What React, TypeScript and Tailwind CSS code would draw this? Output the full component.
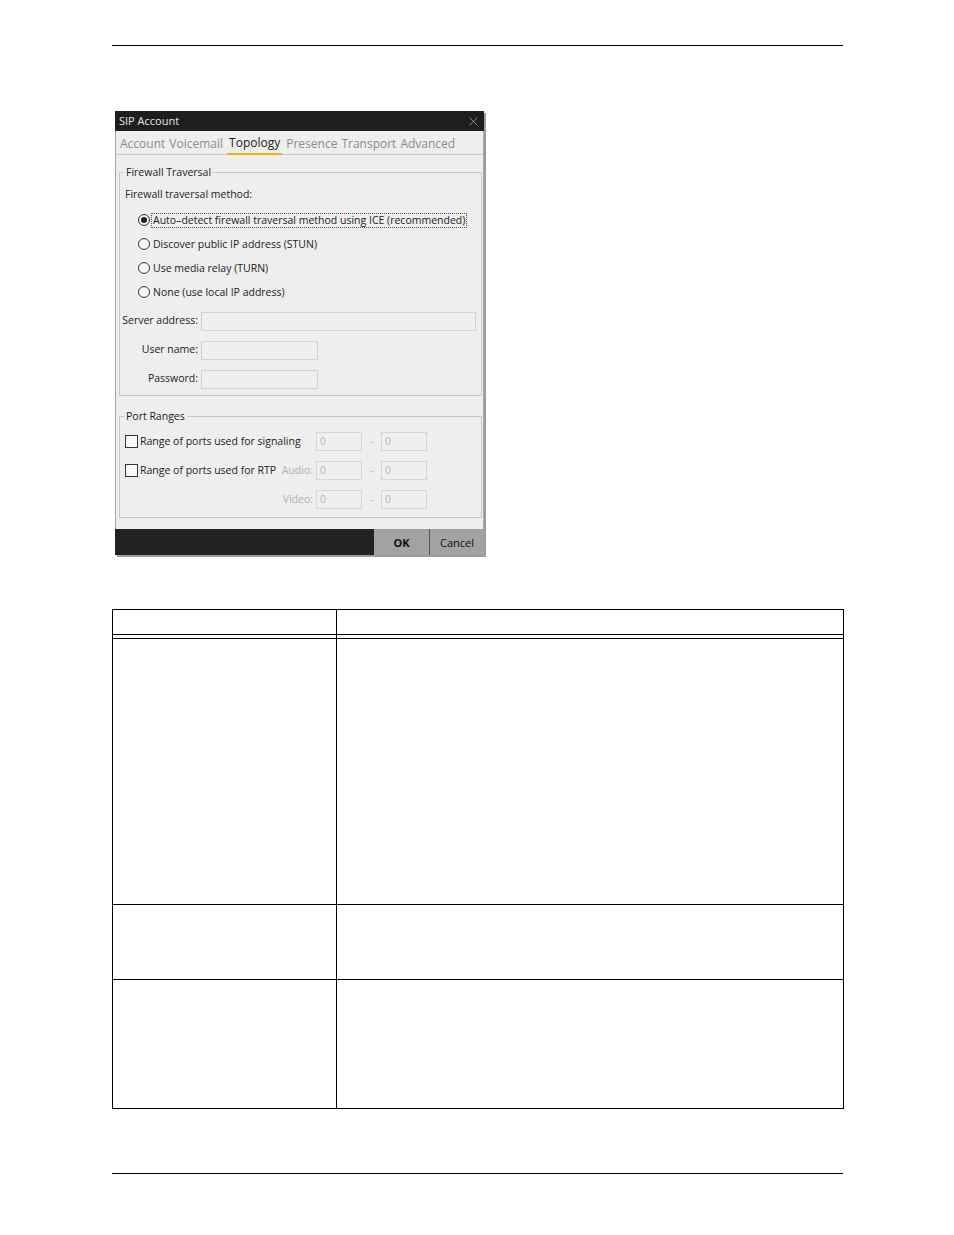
import React from 'react';
import { X } from 'lucide-react';

const uiFont = { fontFamily: '"Open Sans", "Noto Sans", "Liberation Sans", sans-serif' };

const Radio: React.FC<{ checked?: boolean; label: string; focused?: boolean }> = ({ checked, label, focused }) => (
  <div className="flex h-[24px] items-center pl-[13px]">
    <span className="flex size-[12px] items-center justify-center rounded-full border border-[#333] bg-[#f7f7f7]">
      {checked && <span className="size-[6px] rounded-full bg-[#222]" />}
    </span>
    <span
      className={
        'ml-[1px] whitespace-nowrap px-[1px] leading-[13px] text-[#222] ' +
        (focused ? 'border border-dotted border-[#555]' : 'border border-transparent')
      }
    >
      {label}
    </span>
  </div>
);

const TextField: React.FC<{ label: string; width: string }> = ({ label, width }) => (
  <div className="flex h-[20px] items-center">
    <span className="w-[81px] whitespace-nowrap pr-[3px] text-right text-[#222]">{label}</span>
    <div className={'h-[19px] border border-[#d2d2d2] bg-[#efefef] ' + width} />
  </div>
);

const PortInput: React.FC = () => (
  <div className="flex h-[19px] w-[46px] items-center border border-[#d6d6d6] bg-[#efefef] pl-[3px] text-[#b4b4b4]">0</div>
);

const PortRow: React.FC<{ check?: string; side?: string }> = ({ check, side }) => (
  <div className="flex h-[29px] items-center">
    <div className="flex w-[191px] items-center whitespace-nowrap">
      {check && (
        <>
          <span className="size-[13px] border border-[#333] bg-[#f7f7f7]" />
          <span className="ml-[2px] text-[#222]">{check}</span>
        </>
      )}
      <span className="ml-auto pr-[3px] text-[#b0b0b0]">{side}</span>
    </div>
    <PortInput />
    <span className="w-[19px] pl-[2px] text-center text-[#b0b0b0]">-</span>
    <PortInput />
  </div>
);

const tabs = ['Account', 'Voicemail', 'Topology', 'Presence', 'Transport', 'Advanced'];

const SipDialog: React.FC = () => (
  <div className="w-[369px] text-[10.5px] shadow-[2px_2px_0_#9c9c9c]" style={uiFont}>
    <div className="flex h-[20px] items-center justify-between bg-[#1e1e1e] pl-[4px] pr-[3px] text-[11px] text-[#e6e6e6]">
      <span>SIP Account</span>
      <X size={15} strokeWidth={1.2} className="text-[#a8a8a8]" />
    </div>
    <div className="border-x border-[#a8a8a8] bg-[#eeeeee]">
      <div className="flex h-[24px] items-end gap-[4px] border-b border-[#c9c9c9] pl-[4px] text-[12px]">
        {tabs.map((t) => (
          <span
            key={t}
            className={
              'pb-[1px] ' +
              (t === 'Topology'
                ? '-mb-px border-b-2 border-[#f2b300] px-[2px] text-[#222]'
                : 'text-[#8c8c8c]')
            }
          >
            {t}
          </span>
        ))}
      </div>

      <div className="pb-[11px] pl-[3px] pr-[1px] pt-[10px]">
        <fieldset className="border border-[#c8c8c8] pb-[6px] pl-[5px]">
          <legend className="-ml-[1px] px-[2px] leading-[14px] text-[#222]">Firewall Traversal</legend>
          <div className="mt-[6px] flex h-[20px] items-center text-[#222]">Firewall traversal method:</div>
          <div className="mt-[3px]">
            <Radio checked focused label="Auto–detect firewall traversal method using ICE (recommended)" />
            <Radio label="Discover public IP address (STUN)" />
            <Radio label="Use media relay (TURN)" />
            <Radio label="None (use local IP address)" />
          </div>
          <div className="-ml-[5px] mt-[7px] flex flex-col gap-[9px]">
            <TextField label="Server address:" width="w-[275px]" />
            <TextField label="User name:" width="w-[117px]" />
            <TextField label="Password:" width="w-[117px]" />
          </div>
        </fieldset>

        <fieldset className="mt-[13px] border border-[#c8c8c8] pb-[3px] pl-[5px]">
          <legend className="-ml-[1px] px-[2px] leading-[14px] text-[#222]">Port Ranges</legend>
          <div className="mt-[4px]">
            <PortRow check="Range of ports used for signaling" />
            <PortRow check="Range of ports used for RTP" side="Audio:" />
            <PortRow side="Video:" />
          </div>
        </fieldset>
      </div>
    </div>
    <div className="flex h-[26px] justify-end bg-[#222222] text-[11px]">
      <button className="w-[56px] border-r border-[#555] bg-[#a2a2a2] pt-[2px] font-bold text-[#111]">OK</button>
      <button className="w-[54px] bg-[#a2a2a2] pt-[2px] text-[#111]">Cancel</button>
    </div>
  </div>
);

const TableRow: React.FC<{ h: string; last?: boolean }> = ({ h, last }) => (
  <div className={'flex ' + h + (last ? '' : ' border-b border-black')}>
    <div className="w-[224px] border-r border-black" />
    <div className="flex-1" />
  </div>
);

export default function App() {
  return (
    <div className="relative h-[1235px] w-[954px] overflow-hidden bg-white">
      <div className="pl-[112px] pt-[45px]">
        <div className="h-[1px] w-[731px] bg-black" />
        <div className="ml-[3px] mt-[65px]">
          <SipDialog />
        </div>
        <div className="mt-[54px] w-[732px] border border-black">
          <TableRow h="h-[25px]" />
          <TableRow h="h-[4px]" />
          <TableRow h="h-[266px]" />
          <TableRow h="h-[75px]" />
          <TableRow h="h-[128px]" last />
        </div>
        <div className="mt-[64px] h-[1px] w-[731px] bg-black" />
      </div>
    </div>
  );
}
